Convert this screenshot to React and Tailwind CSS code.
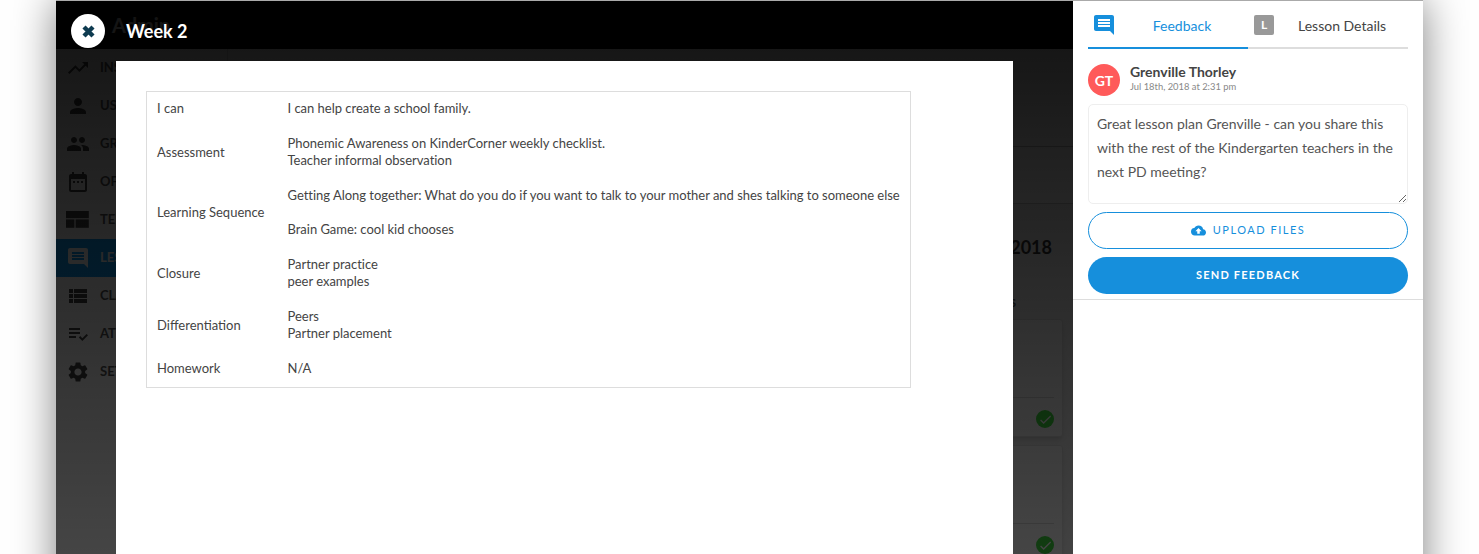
// App.jsx
import { MdTrendingUp, MdPerson, MdPeople, MdDateRange, MdMessage, MdViewList, MdPlaylistAddCheck, MdSettings, MdCloudUpload, MdCheck } from 'react-icons/md';

const WebIcon = ({ className }) => (
    <svg className={className} viewBox="0 0 20 15" fill="currentColor">
        <rect x="0" y="0" width="19" height="6" />
        <rect x="0" y="7" width="7" height="7" />
        <rect x="8" y="7" width="11" height="7" />
    </svg>
);

const CloseIcon = ({ className }) => (
    <svg className={className} viewBox="0 0 13 13" fill="none" stroke="currentColor" strokeWidth="4.4">
        <path d="M2 2l9 9M11 2l-9 9" />
    </svg>
);

const NAV_ITEMS = [
    { label: 'INSIGHTS', icon: MdTrendingUp },
    { label: 'USERS', icon: MdPerson },
    { label: 'GROUPS', icon: MdPeople },
    { label: 'OFFICE', icon: MdDateRange },
    { label: 'TEMPLATES', icon: WebIcon },
    { label: 'LESSONS', icon: MdMessage, active: true },
    { label: 'CLASSES', icon: MdViewList },
    { label: 'ATTENDANCE', icon: MdPlaylistAddCheck },
    { label: 'SETTINGS', icon: MdSettings },
];

const ROWS = [
    ['I can', ['I can help create a school family.']],
    ['Assessment', ['Phonemic Awareness on KinderCorner weekly checklist.', 'Teacher informal observation']],
    ['Learning Sequence', ['Getting Along together: What do you do if you want to talk to your mother and shes talking to someone else', '\u00a0', 'Brain Game: cool kid chooses']],
    ['Closure', ['Partner practice', 'peer examples']],
    ['Differentiation', ['Peers', 'Partner placement']],
    ['Homework', ['N/A']],
];

function Sidebar() {
    return (
        <nav className="w-[172px] shrink-0 border-r border-[#ddd] bg-white">
            {NAV_ITEMS.map(({ label, icon: Icon, active }) => (
                <div
                    key={label}
                    className={`flex h-[38px] items-center text-[13px] font-bold ${active ? 'bg-[#0d9cf5] text-white' : 'text-[#555]'}`}
                >
                    <span className="flex w-[44px] justify-center">
                        <Icon className={`h-[24px] w-[24px] ${active ? '-scale-x-100 text-white' : 'text-[#444]'}`} />
                    </span>
                    {label}
                </div>
            ))}
        </nav>
    );
}

function LessonCard({ className = '' }) {
    return (
        <div className={`flex h-[118px] flex-col rounded-[3px] border border-[#e5e5e5] bg-white px-2 shadow-md ${className}`}>
            <div className="h-[78px] border-b border-[#ddd]" />
            <div className="flex justify-end pt-[12px]">
                <span className="flex h-[18px] w-[18px] items-center justify-center rounded-full bg-[#3fe03f] text-white">
                    <MdCheck className="h-[15px] w-[15px]" />
                </span>
            </div>
        </div>
    );
}

function Backdrop() {
    return (
        <div className="flex h-full flex-col">
            <div className="h-[48px] shrink-0 bg-black pl-[56px] text-[20px] leading-[48px] font-bold text-white">Admin</div>
            <div className="flex min-h-0 flex-1">
                <Sidebar />
                <main className="min-w-0 flex-1 bg-[#f4f4f4]">
                    <div className="h-[98px] border-b border-[#bbb] bg-white" />
                    <div className="h-[57px] border-b border-[#ccc] bg-white" />
                    <div className="pr-[10px]">
                        <h2 className="pt-[30px] pr-[11px] text-right text-[18px] leading-[26px] font-bold text-[#333]">Lesson Plans July 2018</h2>
                        <div className="pt-[36px] pr-[47px] text-right text-[11px] leading-[14px] font-bold text-[#555]">STATUS</div>
                        <LessonCard className="mt-[9px]" />
                        <LessonCard className="mt-[8px]" />
                    </div>
                </main>
            </div>
        </div>
    );
}

function LessonModal() {
    return (
        <div className="absolute inset-0 flex flex-col bg-linear-to-b from-black/[0.93] to-black/[0.73]">
            <header className="flex h-[48px] shrink-0 items-start pt-[13px] pl-[15px]">
                <button className="flex h-[34px] w-[34px] items-center justify-center rounded-full bg-white text-[#0e3b50]">
                    <CloseIcon className="h-[13px] w-[13px]" />
                </button>
                <h1 className="ml-[21px] text-[18px] leading-[34px] font-bold text-white">Week 2</h1>
            </header>
            <div className="mx-[60px] mt-[12px] min-h-0 flex-1 bg-white p-[30px]">
                <table className="w-[765px] table-fixed border border-[#ddd] text-[13px] leading-[17px] text-[#444]">
                    <tbody>
                        {ROWS.map(([label, lines]) => (
                            <tr key={label}>
                                <td className="w-[141px] pt-[8px] pb-[10px] pl-[10px] align-middle">{label}</td>
                                <td className="pt-[8px] pr-[10px] pb-[10px] align-middle tracking-[-0.02px] whitespace-nowrap">
                                    {lines.map((line, i) => (
                                        <div key={i}>{line}</div>
                                    ))}
                                </td>
                            </tr>
                        ))}
                    </tbody>
                </table>
            </div>
        </div>
    );
}

function FeedbackPanel() {
    return (
        <aside className="w-[350px] shrink-0 bg-white text-[#444]">
            <div className="border-b border-[#ddd] px-[15px] pb-[5px]">
                <div className="flex">
                    <div className="flex h-[48px] w-[160px] items-center border-b-2 border-[#168fdc] pt-[2px] text-[#168fdc]">
                        <span className="flex w-[32px] justify-center">
                            <MdMessage className="h-[24px] w-[24px] -scale-x-100" />
                        </span>
                        <span className="flex-1 pr-[4px] text-center text-[14px]">Feedback</span>
                    </div>
                    <div className="flex h-[48px] flex-1 items-center border-b-2 border-[#ddd] pt-[2px]">
                        <span className="ml-[6px] flex h-[20px] w-[20px] items-center justify-center rounded-[2px] bg-[#999] text-[12px] font-bold text-white">L</span>
                        <span className="ml-[24px] text-[14px]">Lesson Details</span>
                    </div>
                </div>
                <div className="mt-[15px] flex items-center">
                    <span className="flex h-[32px] w-[32px] items-center justify-center rounded-full bg-[#ff5a5a] text-[14px] font-bold text-white">GT</span>
                    <div className="ml-[10px] pb-[3px]">
                        <div className="text-[14px] leading-[16px] font-bold">Grenville Thorley</div>
                        <div className="text-[9.4px] leading-[13px] text-[#888]">Jul 18th, 2018 at 2:31 pm</div>
                    </div>
                </div>
                <textarea
                    className="mt-[8px] block h-[100px] w-full resize-y rounded-[5px] border border-[#eee] px-[8px] py-[7px] text-[14px] leading-[24px] text-[#555] outline-none"
                    defaultValue="Great lesson plan Grenville - can you share this with the rest of the Kindergarten teachers in the next PD meeting?"
                />
                <button className="mt-[8px] flex h-[37px] w-full items-center justify-center rounded-full border border-[#168fdc] text-[11px] tracking-[1.5px] text-[#168fdc]">
                    <MdCloudUpload className="mr-[7px] h-[15px] w-[15px]" />
                    UPLOAD FILES
                </button>
                <button className="mt-[8px] block h-[37px] w-full rounded-full bg-[#168fdc] text-[11px] font-bold tracking-[1.2px] text-white">
                    SEND FEEDBACK
                </button>
            </div>
        </aside>
    );
}

export default function App() {
    return (
        <div className="h-[554px] overflow-hidden bg-white px-[56px] font-['Lato','Liberation_Sans',sans-serif]">
            <div className="flex h-[600px] border-t border-[#aaa] shadow-[0_0_40px_rgba(0,0,0,0.5)]">
                <div className="relative h-[554px] min-w-0 flex-1 overflow-hidden">
                    <Backdrop />
                    <LessonModal />
                </div>
                <FeedbackPanel />
            </div>
        </div>
    );
}
